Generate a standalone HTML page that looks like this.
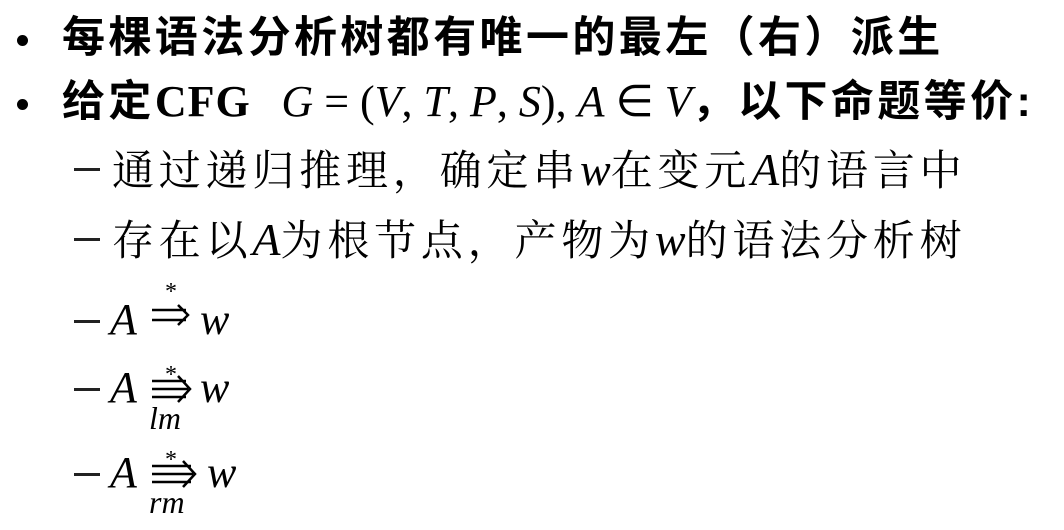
<!DOCTYPE html>
<html><head><meta charset="utf-8"><style>
body{margin:0;width:1064px;height:530px;background:#fff;position:relative;overflow:hidden;color:#000}
.l{position:absolute;white-space:nowrap;line-height:1}
.b{font-family:"Liberation Sans","Noto Sans CJK SC",sans-serif;font-weight:bold;font-size:43px;letter-spacing:3.4px}
.s{font-family:"Liberation Serif","Noto Serif CJK SC",serif;font-size:42px;letter-spacing:4.8px}
.m{font-family:"Liberation Serif",serif;font-style:italic;font-weight:normal;letter-spacing:0}
.r{font-family:"Liberation Serif",serif;font-style:normal;font-weight:normal;letter-spacing:0}
.dot{position:absolute;width:11px;height:11px;border-radius:50%;background:#000}
.dash{position:absolute;height:3px;width:26px;background:#222}
svg{position:absolute}
</style></head><body>
<div class="dot" style="left:17px;top:35px"></div>
<div class="l b" style="left:62px;top:17px">每棵语法分析树都有唯一的最左（右）派生</div>

<div class="dot" style="left:17px;top:99px"></div>
<div class="l b" style="left:62px;top:80px">给定<span style="font-family:'Liberation Serif',serif;font-size:44px;letter-spacing:1px">CFG</span>&nbsp; <span class="m" style="font-size:44px">G</span><span class="r" style="font-size:44px"> = (</span><span class="m" style="font-size:44px">V</span><span class="r" style="font-size:44px">,&nbsp;</span><span class="m" style="font-size:44px">T</span><span class="r" style="font-size:44px">,&nbsp;</span><span class="m" style="font-size:44px">P</span><span class="r" style="font-size:44px">,&nbsp;</span><span class="m" style="font-size:44px">S</span><span class="r" style="font-size:44px">),&nbsp;</span><span class="m" style="font-size:44px">A</span><span class="r" style="font-size:44px"> ∈ </span><span class="m" style="font-size:44px">V</span>，以下命题等价:</div>

<div class="dash" style="left:74px;top:168px"></div>
<div class="l s" style="left:112px;top:147px">通过递归推理，确定串<span class="m" style="font-size:46px">w</span>在变元<span class="m" style="font-size:46px">A</span>的语言中</div>

<div class="dash" style="left:74px;top:238px"></div>
<div class="l s" style="left:112px;top:217px">存在以<span class="m" style="font-size:46px">A</span>为根节点，产物为<span class="m" style="font-size:46px">w</span>的语法分析树</div>

<div class="dash" style="left:74px;top:320px"></div>
<div class="l m" style="left:110px;top:298px;font-size:44px">A</div>
<svg style="left:150px;top:280px" width="45" height="55" viewBox="0 0 45 55">
<text x="15" y="19" font-family="Liberation Serif" font-size="24">*</text>
<path d="M2 30H36M2 40H36M28 25L38 35L28 45" fill="none" stroke="#000" stroke-width="2.5"/>
</svg>
<div class="l m" style="left:200px;top:298px;font-size:44px">w</div>

<div class="dash" style="left:74px;top:388px"></div>
<div class="l m" style="left:110px;top:366px;font-size:44px">A</div>
<svg style="left:150px;top:360px" width="45" height="45" viewBox="0 0 45 45">
<text x="15" y="22" font-family="Liberation Serif" font-size="24">*</text>
<path d="M2 21H36M2 29H38M2 37H36M28 16L40 29L28 42" fill="none" stroke="#000" stroke-width="2.5"/>
</svg>
<div class="l m" style="left:200px;top:366px;font-size:44px">w</div>
<div class="l m" style="left:149px;top:402px;font-size:32px">lm</div>

<div class="dash" style="left:74px;top:473px"></div>
<div class="l m" style="left:110px;top:451px;font-size:44px">A</div>
<svg style="left:150px;top:445px" width="50" height="45" viewBox="0 0 50 45">
<text x="15" y="22" font-family="Liberation Serif" font-size="24">*</text>
<path d="M2 21H41M2 29H43M2 37H41M33 16L45 29L33 42" fill="none" stroke="#000" stroke-width="2.5"/>
</svg>
<div class="l m" style="left:207px;top:451px;font-size:44px">w</div>
<div class="l m" style="left:149px;top:486px;font-size:32px">rm</div>
</body></html>
